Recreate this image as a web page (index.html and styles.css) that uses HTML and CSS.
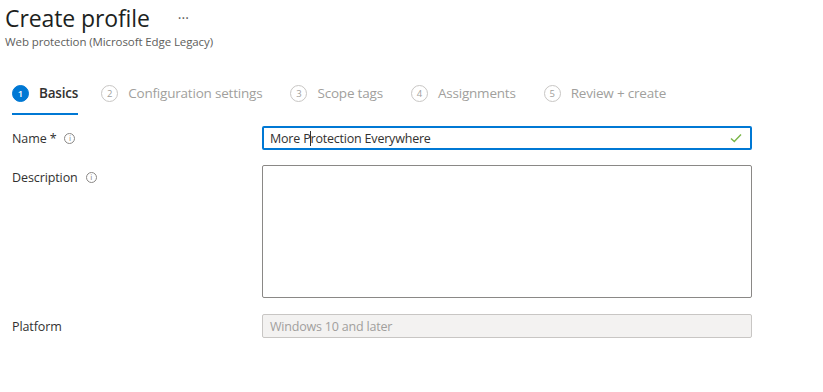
FILE: index.html
```html
<!DOCTYPE html>
<html>
<head>
<meta charset="utf-8">
<link rel="stylesheet" href="styles.css">
</head>
<body>
<div class="header">
  <div class="title-row">
    <h1 class="title">Create profile</h1>
    <span class="more">···</span>
  </div>
  <div class="subtitle">Web protection (Microsoft Edge Legacy)</div>
</div>

<div class="steps">
  <div class="step active"><span class="num">1</span><span class="label">Basics</span></div>
  <div class="step"><span class="num">2</span><span class="label">Configuration settings</span></div>
  <div class="step"><span class="num">3</span><span class="label">Scope tags</span></div>
  <div class="step"><span class="num">4</span><span class="label">Assignments</span></div>
  <div class="step"><span class="num">5</span><span class="label">Review + create</span></div>
</div>

<div class="form">
  <div class="row row-name">
    <div class="field-label">Name&nbsp;*<span class="info">i</span></div>
    <div class="input focused">
      <span class="value">More P<span class="caret"></span>rotection Everywhere</span>
      <svg class="check" width="12" height="10" viewBox="0 0 12 10"><path d="M1 5.5 L4.3 8.6 L11 1.4" fill="none" stroke="#7ab648" stroke-width="1.4"/></svg>
    </div>
  </div>
  <div class="row row-desc">
    <div class="field-label">Description<span class="info">i</span></div>
    <div class="textarea"></div>
  </div>
  <div class="row row-platform">
    <div class="field-label">Platform</div>
    <div class="input disabled"><span class="value">Windows 10 and later</span></div>
  </div>
</div>
</body>
</html>
```

FILE: styles.css
```css
* { box-sizing: border-box; }
body {
  margin: 0;
  background: #ffffff;
  font-family: "Open Sans", "Noto Sans", sans-serif;
  color: #323130;
}
.header { padding: 4px 0 0 5px; }
.title-row { display: flex; align-items: center; height: 28px; }
.title {
  margin: 0;
  font-size: 23px;
  font-weight: 400;
  color: #201f1e;
  letter-spacing: -0.1px;
  line-height: 28px;
}
.more {
  margin-left: 28px;
  font-size: 14px;
  color: #605e5c;
  line-height: 12px;
  position: relative;
  top: 0px;
}
.subtitle {
  font-size: 11.5px;
  color: #605e5c;
  line-height: 16px;
  margin-top: 2px;
  letter-spacing: -0.1px;
}
.steps {
  display: flex;
  margin-top: 34px;
  padding-left: 12px;
  height: 31px;
}
.step {
  display: flex;
  align-items: flex-start;
  margin-right: 28px;
  color: #a19f9d;
  font-size: 13.5px;
  height: 31px;
}
.step .num {
  width: 17px;
  height: 17px;
  border-radius: 50%;
  border: 1px solid #c8c6c4;
  font-size: 9.5px;
  display: flex;
  align-items: center;
  justify-content: center;
  color: #a19f9d;
  margin-right: 10px;
  margin-top: 1px;
}
.step .label { line-height: 19px; letter-spacing: -0.2px; }
.step.active {
  border-bottom: 2px solid #0078d4;
  color: #323130;
  margin-right: 23px;
}
.step.active .num {
  background: #0078d4;
  border-color: #0078d4;
  color: #ffffff;
  font-weight: 600;
}
.step.active .label { font-weight: 600; }
.form { padding-left: 12px; margin-top: 11px; }
.row { display: flex; }
.field-label {
  width: 250px;
  flex: none;
  font-size: 12.5px;
  color: #323130;
  display: flex;
  align-items: center;
  letter-spacing: -0.1px;
}
.info {
  width: 11px;
  height: 11px;
  border: 1px solid #8a8886;
  border-radius: 50%;
  font-size: 7.5px;
  color: #8a8886;
  display: inline-flex;
  align-items: center;
  justify-content: center;
  margin-left: 8px;
  font-family: "DejaVu Sans", sans-serif;
}
.row-name .field-label { height: 24px; }
.row-desc .field-label { height: 24px; align-self: flex-start; }
.input {
  width: 490px;
  height: 24px;
  border: 1px solid #8a8886;
  border-radius: 2px;
  display: flex;
  align-items: center;
  padding: 0 7px;
  font-size: 12.5px;
}
.input.focused {
  border: 2px solid #0078d4;
  padding: 0 6px;
  justify-content: space-between;
}
.value { color: #323130; letter-spacing: -0.2px; }
.caret {
  display: inline-block;
  width: 1px;
  height: 15px;
  background: #323130;
  vertical-align: -3px;
  margin: 0 -1px 0 0;
}
.check { margin-right: 2px; }
.row-desc { margin-top: 15px; }
.textarea {
  width: 490px;
  height: 133px;
  border: 1px solid #8a8886;
  border-radius: 2px;
}
.row-platform { margin-top: 16px; }
.input.disabled {
  background: #f3f2f1;
  border-color: #c8c6c4;
}
.input.disabled .value { color: #a19f9d; }
```
